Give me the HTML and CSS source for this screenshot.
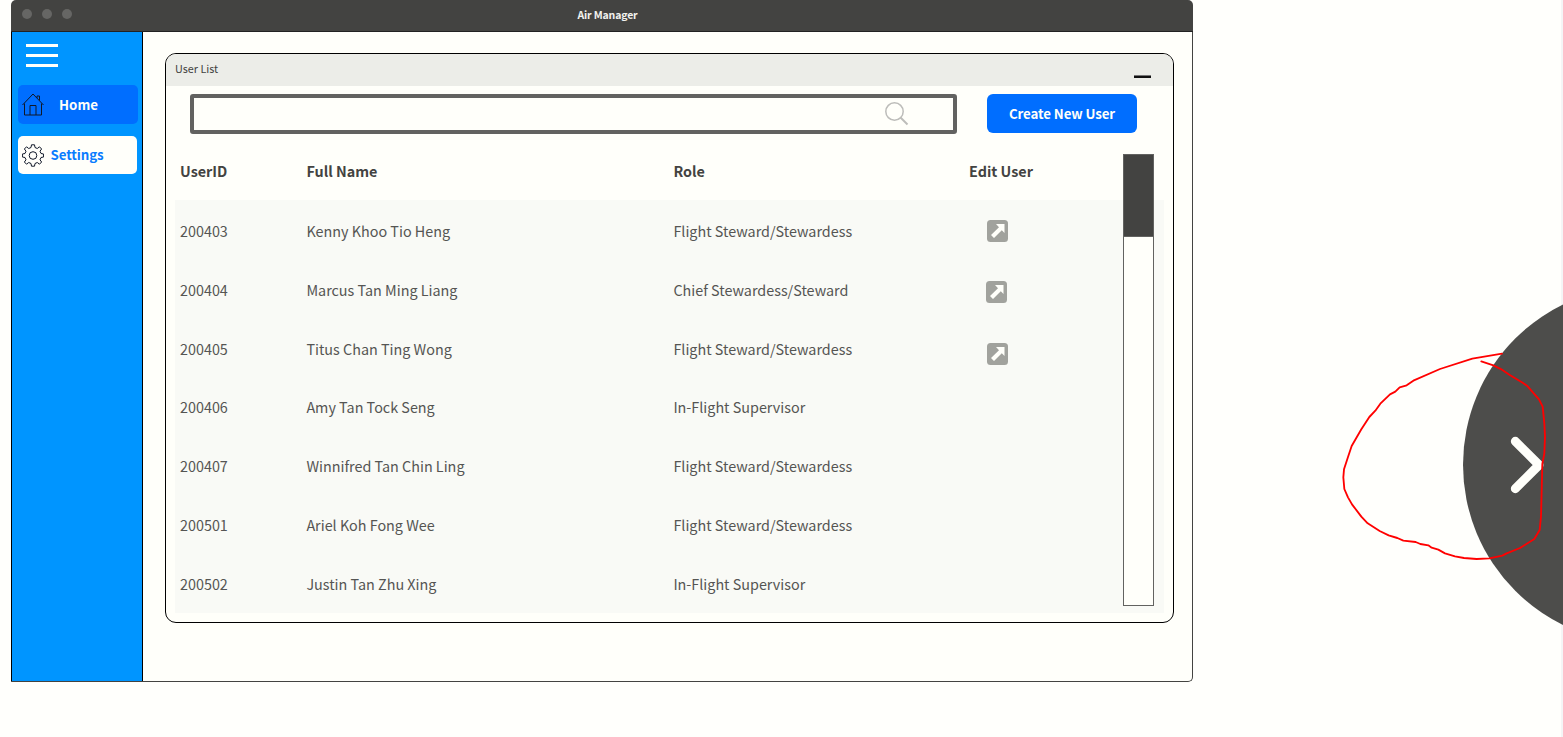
FILE: index.html
```html
<!DOCTYPE html>
<html lang="en">
<head>
<meta charset="utf-8">
<title>Air Manager</title>
<link rel="stylesheet" href="styles.css">
</head>
<body>
<div class="window">
  <header class="titlebar">
    <div class="dots"><i></i><i></i><i></i></div>
    <h1>Air Manager</h1>
  </header>
  <div class="body">
    <nav class="sidebar">
      <div class="burger"><i></i><i></i><i></i></div>
      <a class="nav home">
        <svg width="22" height="23" viewBox="0 0 22 23"><path d="M.5 12 11 1l10.500 11M2.500 10.500V22h17V10.500M8 22V12.500h6V22M15 5V3h2.500v4.500"/></svg>
        <span>Home</span>
      </a>
      <a class="nav settings">
        <svg width="22" height="23" viewBox="-11 -11.500 22 23"><circle r="3.800"/><path d="M-2-8-1.500-10.700H1.500L2-8 4.300-7 6.500-8.700 8.600-6.500 7-4.300 8-2 10.600-1.500V1.500L8 2 7 4.300 8.600 6.500 6.500 8.700 4.300 7 2 8 1.500 10.700H-1.500L-2 8-4.300 7-6.500 8.700-8.600 6.500-7 4.300-8 2-10.600 1.500V-1.500L-8-2-7-4.300-8.600-6.500-6.500-8.700-4.300-7Z"/></svg>
        <span>Settings</span>
      </a>
    </nav>
    <main class="content">
      <section class="panel">
        <div class="panel-head"><h2>User List</h2><i class="minimize"></i></div>
        <div class="tools">
          <div class="search">
            <svg width="24" height="24" viewBox="0 0 24 24"><circle cx="9.500" cy="9.500" r="8.700"/><path d="m15.500 15.500 7 7" stroke-width="2"/></svg>
          </div>
          <button class="create">Create New User</button>
        </div>
        <div class="list">
          <div class="table">
            <div class="row head"><span>UserID</span><span>Full Name</span><span>Role</span><span>Edit User</span></div>
            <div class="row"><span>200403</span><span>Kenny Khoo Tio Heng</span><span>Flight Steward/Stewardess</span><span class="edit"><svg width="21" height="22" viewBox="0 0 21 22"><rect width="21" height="22" rx="3.500"/><path d="M9 4h8.500v9l-2.700-2.700L7 18l-3-3 8-7.800Z"/></svg></span></div>
            <div class="row"><span>200404</span><span>Marcus Tan Ming Liang</span><span>Chief Stewardess/Steward</span><span class="edit second"><svg width="21" height="22" viewBox="0 0 21 22"><rect width="21" height="22" rx="3.500"/><path d="M9 4h8.500v9l-2.700-2.700L7 18l-3-3 8-7.800Z"/></svg></span></div>
            <div class="row"><span>200405</span><span>Titus Chan Ting Wong</span><span>Flight Steward/Stewardess</span><span class="edit third"><svg width="21" height="22" viewBox="0 0 21 22"><rect width="21" height="22" rx="3.500"/><path d="M9 4h8.500v9l-2.700-2.700L7 18l-3-3 8-7.800Z"/></svg></span></div>
            <div class="row"><span>200406</span><span>Amy Tan Tock Seng</span><span>In-Flight Supervisor</span></div>
            <div class="row"><span>200407</span><span>Winnifred Tan Chin Ling</span><span>Flight Steward/Stewardess</span></div>
            <div class="row"><span>200501</span><span>Ariel Koh Fong Wee</span><span>Flight Steward/Stewardess</span></div>
            <div class="row"><span>200502</span><span>Justin Tan Zhu Xing</span><span>In-Flight Supervisor</span></div>
          </div>
          <div class="scrollbar"><i></i></div>
        </div>
      </section>
    </main>
  </div>
</div>
<i class="edge"></i>
<svg class="next" width="233" height="350" viewBox="0 0 699 1050">
  <circle cx="934" cy="524" r="535" fill="#4d4d4b"/>
  <path class="chevron" d="m556 454 71 71-71 71"/>
  <path class="pen" d="M516 191 427 206 330 237 250 272 230 286 209 292 196 305 180 313 151 341 136 362 118 381 94 418 65 468 54 501 42 538 40 562 43 597 54 622 66 643 94 680 113 700 149 723 176 736 202 744 220 752 257 756 271 762 295 766 305 773 325 779 345 790 375 799 402 804 440 807 478 805 517 797 530 790 570 774 613 747 629 720 633 680 635 600 637 522 643 490 645 440 643 400 638 350 627 328 593 289 578 278 538 254 514 238 490 226 454 214"/>
</svg>
</body>
</html>
```

FILE: styles.css
```css
* { box-sizing: border-box; }
body {
  margin: 0;
  height: 737px;
  position: relative;
  overflow: hidden;
  background: #fffffc;
  color: #555553;
  font: 14.360px/20px "Noto Sans CJK SC", "Noto Sans", sans-serif;
}
i { display: block; }
h1, h2 { margin: 0; }
svg { display: block; flex: none; }
.window {
  width: 1182px;
  height: 682px;
  margin-left: 11px;
  display: flex;
  flex-direction: column;
  background: #fffffa;
  border-radius: 5px;
}
.titlebar {
  height: 32px;
  flex: none;
  display: grid;
  grid-template-columns: 1fr auto 1fr;
  padding-left: 11px;
  background: #434341;
  border-bottom: 1px solid #222;
  border-radius: 5px 5px 0 0;
}
.dots { display: flex; gap: 10px; padding: 9px 0 0 .400px; }
.dots i { width: 10px; height: 10px; border-radius: 50%; background: #666664; }
h1 { color: #f2f2ee; font-size: 10.500px; line-height: 30px; letter-spacing: -.150px; }
.body {
  flex: 1;
  display: flex;
  border: 1px solid #434341;
  border-left-color: #000;
  border-top: 0;
  border-radius: 0 0 5px 0;
}
.sidebar {
  width: 131px;
  padding: 12px 4px 0 6px;
  background: #0095ff;
  border-right: 1px solid #000;
}
.burger { display: flex; flex-direction: column; justify-content: space-between; margin-left: 8px; width: 32px; height: 23px; }
.burger i { height: 3px; background: #fffffa; }
.nav {
  display: flex;
  align-items: center;
  height: 39px;
  padding-left: 4px;
  border-radius: 5px;
  font-weight: 700;
  font-size: 13.300px;
}
.nav svg { fill: none; stroke: #101828; stroke-width: 1; }
.home { margin-top: 18px; background: #006eff; color: #fffffa; }
.home span { margin: 1px 0 0 15px; }
.settings { margin-top: 12px; height: 38px; margin-right: 1px; background: #fffffa; color: #0a7cff; }
.settings span { margin-left: 6.500px; letter-spacing: -.100px; }
.content { padding: 21px 0 0 22px; }
.panel {
  width: 1009px;
  height: 570px;
  border: 1px solid #000;
  border-radius: 11px;
  overflow: hidden;
}
.panel-head {
  height: 32px;
  display: flex;
  justify-content: space-between;
  padding: 0 22px 0 9px;
  background: #ecede8;
}
h2 { font-size: 10.800px; font-weight: 400; line-height: 29px; color: #434341; }
.minimize { width: 17px; height: 3px; margin-top: 21px; background: #111; border-top: 1px solid #777; }
.tools { display: flex; gap: 30px; padding: 8px 0 0 24px; height: 68px; }
.search {
  width: 767px;
  height: 40px;
  padding: 4px 44px 0 0;
  display: flex;
  justify-content: flex-end;
  border: 4px solid #626260;
  border-radius: 3px;
}
.search svg { fill: none; stroke: #bdbdba; stroke-width: 1.500; }
.create {
  width: 150px;
  height: 39px;
  padding: 0;
  border: 0;
  border-radius: 6px;
  background: #006eff;
  color: #fffffa;
  font: 700 13.300px/40px "Noto Sans CJK SC", sans-serif;
  letter-spacing: -.100px;
}
.list { position: relative; padding: 0 9px; }
.row {
  display: grid;
  grid-template-columns: 126.400px 367px 295.600px 1fr;
  align-items: center;
  height: 59px;
  padding: 2px 0 0 5px;
  background: #f9faf6;
}
.row:nth-child(5) { height: 58px; }
.row:nth-child(8) { height: 60px; padding-top: 1px; }
.row.head { height: 46px; padding: 0 0 12px 5px; background: none; color: #434341; font-weight: 700; }
.edit { padding-left: 18.500px; }
.edit.second { padding: 4px 0 0 17.500px; }
.edit.third { padding-top: 10px; }
.edit rect { fill: #a1a29d; }
.edit path { fill: #fffffa; }
.scrollbar {
  position: absolute;
  top: 0;
  right: 19px;
  width: 31px;
  height: 452px;
  border: 1px solid #626260;
  background: #fffffa;
}
.scrollbar i { height: 82px; background: #434341; border-bottom: 1px solid #626260; }
.next { position: absolute; right: 0; top: 290px; }
.chevron { fill: none; stroke: #fffffa; stroke-width: 27; stroke-linecap: round; stroke-linejoin: round; }
.pen { fill: none; stroke: #f00; stroke-width: 5.500; stroke-linecap: round; stroke-linejoin: round; }
.edge { position: absolute; right: 0; top: 0; width: 2px; height: 737px; background: rgba(225, 225, 235, .35); }
```
